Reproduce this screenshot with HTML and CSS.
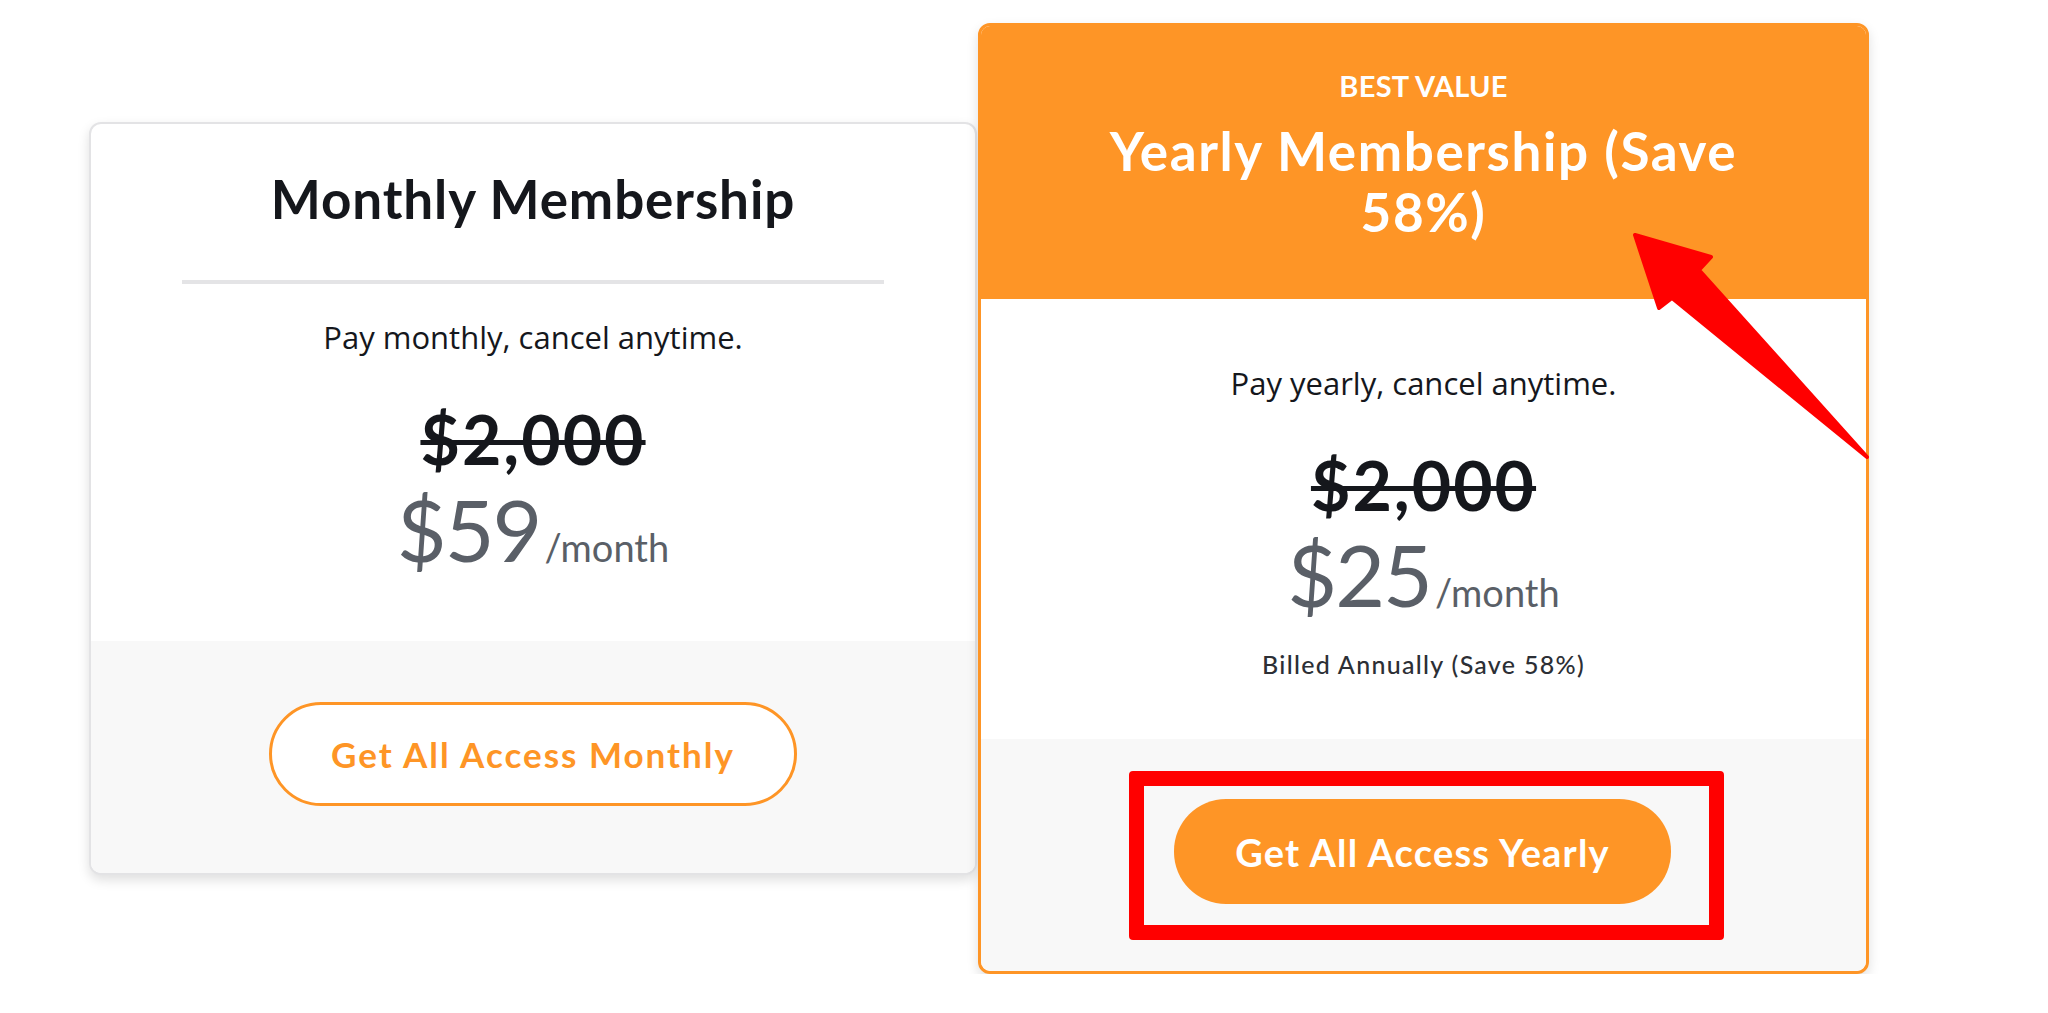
FILE: index.html
```html
<!DOCTYPE html>
<html>
<head>
	<meta charset="utf-8">
	<meta name="viewport" content="width=device-width, initial-scale=1">
	<title>Membership plans</title>
	<link rel="stylesheet" href="styles.css">
</head>
<body>
	<div class="plans">

		<div class="plan plan-monthly">
			<div class="plan-body">
				<h2 class="plan-title">Monthly Membership</h2>
				<hr class="plan-rule">
				<p class="plan-note">Pay monthly, cancel anytime.</p>
				<div class="old-price">$2,000</div>
				<div class="price"><span class="amount">$59</span><span class="per">/month</span></div>
			</div>
			<div class="plan-foot">
				<button class="btn btn-outline">Get All Access Monthly</button>
			</div>
		</div>

		<div class="plan plan-yearly">
			<div class="plan-head">
				<div class="badge-text">BEST VALUE</div>
				<h2 class="plan-title">Yearly Membership (Save 58%)</h2>
			</div>
			<div class="plan-body">
				<p class="plan-note">Pay yearly, cancel anytime.</p>
				<div class="old-price">$2,000</div>
				<div class="price"><span class="amount">$25</span><span class="per">/month</span></div>
				<div class="billed">Billed Annually (Save 58%)</div>
			</div>
			<div class="plan-foot">
				<div class="mark-box">
					<button class="btn btn-solid">Get All Access Yearly</button>
				</div>
			</div>

			<!-- annotation arrow -->
			<svg class="mark-arrow" width="245" height="240" viewBox="0 0 245 240">
				<polygon points="7,7 83,29 71,42 239,229 44,70 31,80" fill="#ff0000" stroke="#ff0000" stroke-width="4" stroke-linejoin="round"/>
			</svg>
		</div>

	</div>
</body>
</html>
```

FILE: styles.css
```css
body {
	margin: 0;
	background: #ffffff;
	font-family: "Open Sans", "Liberation Sans", sans-serif;
	color: #15171c;
}

.plans {
	display: flex;
	align-items: center;
	gap: 1px;
	padding: 23px 0 0 89px;
}

.plan {
	position: relative;
	box-sizing: border-box;
	background: #ffffff;
	border-radius: 12px;
	box-shadow: 0 5px 12px rgba(0, 0, 0, 0.13);
	text-align: center;
}

.plan-monthly {
	width: 888px;
	border: 2px solid #e3e3e5;
}

.plan-yearly {
	width: 891px;
	border: 3px solid #fe9526;
}

.plan-head {
	background: #fe9526;
	color: #ffffff;
	border-radius: 9px 9px 0 0;
	padding: 43px 0 57px;
}

.badge-text {
	font-family: "Lato", sans-serif;
	font-weight: 700;
	font-size: 29px;
	line-height: 1.2;
	letter-spacing: 0.3px;
}

.plan-title {
	margin: 0;
	font-family: "Lato", sans-serif;
	font-weight: 700;
	font-size: 53px;
	line-height: 1.2;
	letter-spacing: 0.9px;
}

.plan-head .plan-title {
	max-width: 720px;
	margin: 16px auto 0;
	line-height: 61px;
	letter-spacing: 1.6px;
}

.plan-body {
	padding: 43px 0 69px;
}

.plan-yearly .plan-body {
	padding: 64px 0 60px;
}

.plan-rule {
	width: 702px;
	height: 4px;
	margin: 49px auto 0;
	border: 0;
	background: #e4e4e6;
}

.plan-note {
	margin: 33px 0 0;
	font-size: 31px;
	line-height: 1.3;
	color: #15171c;
}

.plan-yearly .plan-note {
	margin-top: 0;
}

.old-price {
	margin-top: 48px;
	font-family: "Lato", sans-serif;
	font-weight: 700;
	font-size: 68px;
	line-height: 1;
	letter-spacing: 2px;
	text-decoration: line-through;
	text-decoration-thickness: 5px;
	color: #15171c;
}

.price {
	margin-top: 13px;
	display: flex;
	justify-content: center;
	align-items: baseline;
	font-family: "Lato", sans-serif;
	font-weight: 400;
	color: #5a5f67;
	line-height: 1;
}

.plan-yearly .price {
	margin-top: 12px;
}

.amount {
	font-size: 86px;
	letter-spacing: -2px;
}

.per {
	font-size: 38px;
	margin-left: 4px;
}

.billed {
	margin-top: 32px;
	font-family: "Lato", sans-serif;
	font-weight: 500;
	font-size: 25px;
	line-height: 1.2;
	letter-spacing: 1.3px;
	color: #2c2f35;
}

.plan-foot {
	background: #f8f8f8;
	border-radius: 0 0 10px 10px;
	display: flex;
	justify-content: center;
	padding: 61px 0 67px;
}

.plan-yearly .plan-foot {
	padding: 32px 0 31px;
}

.btn {
	box-sizing: border-box;
	border-radius: 52px;
	font-family: "Lato", sans-serif;
	font-weight: 700;
	cursor: pointer;
}

.btn-outline {
	width: 528px;
	height: 104px;
	background: #ffffff;
	border: 3px solid #fe9526;
	color: #fe9526;
	font-size: 35px;
	letter-spacing: 2px;
}

.btn-solid {
	width: 497px;
	height: 105px;
	background: #fe9526;
	border: 0;
	color: #ffffff;
	font-size: 38px;
	letter-spacing: 1.2px;
}

.mark-box {
	margin-left: 6px;
	padding: 13px 38px 21px 30px;
	border: 15px solid #ff0000;
	border-radius: 4px;
}

.mark-arrow {
	position: absolute;
	left: 647px;
	top: 202px;
}
```
